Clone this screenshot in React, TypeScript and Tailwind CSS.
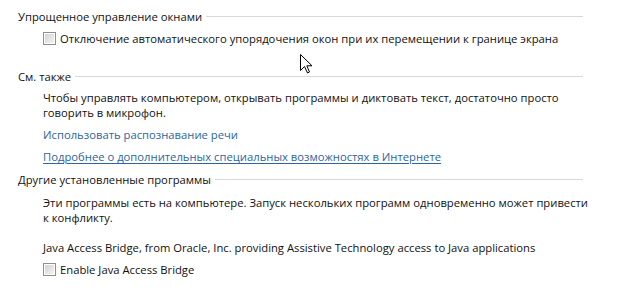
const LINK = "text-[#2c65a0]";

function Checkbox() {
  return (
    <span className="inline-flex h-[13px] w-[13px] shrink-0 border border-[#8e8f8f] bg-white p-px">
      <span className="block h-full w-full bg-gradient-to-br from-[#d2d2d2] to-[#f4f4f4]" />
    </span>
  );
}

function GroupHeader({ title, className }: { title: string; className?: string }) {
  return (
    <div className={`flex items-center pl-[18px] pr-[35px] ${className ?? ""}`}>
      <span className="whitespace-nowrap">{title}</span>
      <span className="ml-[4px] h-px flex-1 bg-[#d6dadf]" />
    </div>
  );
}

function Cursor() {
  return (
    <svg className="absolute left-[300px] top-[54px]" width="13" height="20" viewBox="0 0 13 20">
      <path
        d="M0.5 0.5 L0.5 16.5 L4.5 12.5 L7.5 19 L9.5 18 L6.8 11.8 L12 11.8 Z"
        fill="#fff"
        stroke="#000"
        strokeWidth="1"
      />
    </svg>
  );
}

export default function App() {
  return (
    <div
      className="relative h-[302px] w-[618px] overflow-hidden bg-white text-[11.25px] leading-[15px] text-[#111]"
      style={{ fontFamily: '"Open Sans", "Noto Sans", sans-serif' }}
    >
      <div className="flex flex-col pt-[9px]">
        <GroupHeader title="Упрощенное управление окнами" />
        <label className="mt-[7px] flex items-center gap-[4px] pl-[43px]">
          <Checkbox />
          <span>Отключение автоматического упорядочения окон при их перемещении к границе экрана</span>
        </label>

        <GroupHeader title="См. также" className="mt-[23px]" />
        <p className="mt-[6px] w-[590px] pl-[43px]">
          Чтобы управлять компьютером, открывать программы и диктовать текст, достаточно просто говорить в микрофон.
        </p>
        <a className={`mt-[7px] pl-[43px] ${LINK}`}>Использовать распознавание речи</a>
        <a className={`mt-[7px] pl-[43px] ${LINK}`}>
          <span className="underline underline-offset-2">Подробнее о дополнительных специальных возможностях в Интернете</span>
        </a>

        <GroupHeader title="Другие установленные программы" className="mt-[8px]" />
        <p className="mt-[8px] w-[590px] pl-[43px]">
          Эти программы есть на компьютере. Запуск нескольких программ одновременно может привести к конфликту.
        </p>
        <p className="mt-[15px] pl-[43px]">
          Java Access Bridge, from Oracle, Inc. providing Assistive Technology access to Java applications
        </p>
        <label className="mt-[7px] flex items-center gap-[4px] pl-[43px]">
          <Checkbox />
          <span>Enable Java Access Bridge</span>
        </label>
      </div>
      <Cursor />
    </div>
  );
}
